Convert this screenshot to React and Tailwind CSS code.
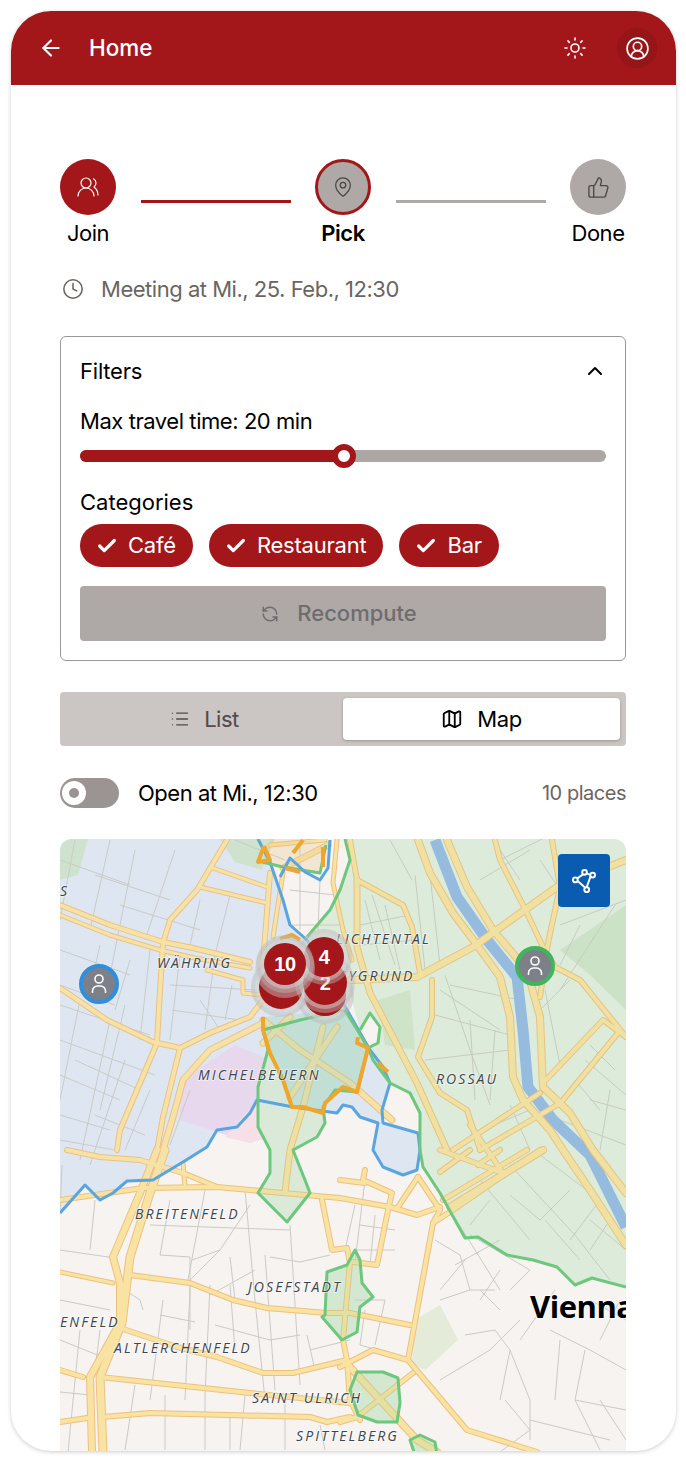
import React from 'react';
import { ArrowLeft, Sun, CircleUserRound, UsersRound, MapPin, ThumbsUp, Clock, ChevronUp, Check, RefreshCcw, List, Map as MapIcon } from 'lucide-react';

// major roads: [width, "x,y x,y ..."] in page coordinates
const roads = [
  [5, '60,905 110,925 163,942 193,948 250,962'],
  [4, '60,915 110,935 160,950 195,958 250,968'],
  [5, '227,840 197,890 170,920 163,943 160,990 157,1043 120,1130 117,1150'],
  [5, '60,988 107,1020 153,1042 180,1048 210,1033 250,1017 263,1000'],
  [5, '180,1048 163,1117 157,1150'],
  [6, '263,1023 210,1050 183,1080 173,1117 163,1150'],
  [4, '210,867 267,887'],
  [4, '200,887 267,903'],
  [4, '207,970 243,980 243,993 262,995'],
  [5, '270,873 263,963'],
  [4, '283,873 273,937'],
  [4, '337,840 333,883 343,930 352,960'],
  [6, '263,1020 300,1050 350,1083 392,1120'],
  [6, '337,1027 290,1097'],
  [6, '290,1017 263,1043'],
  [6, '323,1027 303,1107 290,1150 285,1192'],
  [4, '270,845 325,840'],
  [6, '283,868 328,845'],
  [5, '60,1200 143,1188 217,1187 283,1193 340,1198 390,1207 417,1215 440,1207'],
  [7, '157,1150 140,1193 113,1257 120,1283 120,1323 90,1377 92,1452'],
  [8, '165,1150 150,1193 130,1257 122,1323 100,1377 103,1452'],
  [5, '67,1150 100,1157 140,1160 183,1173 217,1187'],
  [4, '183,1163 185,1187'],
  [4, '60,1272 113,1283'],
  [5, '130,1275 190,1283 233,1300 267,1308 327,1313 350,1313 410,1325'],
  [5, '120,1328 177,1347 217,1357 263,1373 293,1373 347,1360'],
  [5, '60,1370 83,1377'],
  [5, '100,1377 250,1393 350,1403'],
  [5, '60,1422 87,1418'],
  [5, '103,1417 150,1413 310,1417 327,1422 350,1417'],
  [5, '322,1200 332,1250 347,1248 350,1263 343,1340 347,1360 350,1400 360,1420'],
  [5, '408,1360 433,1223 453,1210 540,1150'],
  [5, '408,1360 467,1430 537,1452'],
  [5, '408,1360 373,1350 340,1367'],
  [7, '350,1367 417,1440 437,1452'],
  [5, '413,1373 357,1417 340,1422'],
  [5, '418,1177 440,1210 433,1223'],
  [5, '418,1177 398,1207'],
  [5, '365,1170 363,1180 392,1193 388,1210 377,1265 353,1262'],
  [5, '340,1180 365,1183'],
  [7, '543,1150 450,1207'],
  [5, '527,1150 443,1200'],
  [5, '440,1150 503,1173 470,1125'],
  [5, '470,1150 440,1172'],
  [5, '500,1150 478,1165'],
  [7, '418,840 430,873 453,913 477,945 500,977 510,1017 513,1077 523,1100 550,1130 563,1150 590,1190 626,1245'],
  [7, '447,840 467,887 493,930 527,970 540,1017 543,1087 570,1113 593,1150 626,1193'],
  [7, '350,980 417,977 473,947 557,887 626,860'],
  [5, '495,840 500,860 527,913 543,947 555,967'],
  [5, '552,840 560,887 548,943 540,997'],
  [5, '555,967 580,980 626,1037'],
  [5, '543,1083 603,1020 626,1037'],
  [5, '563,1100 618,1033'],
  [5, '453,1150 540,1093'],
  [5, '480,1150 557,1105'],
  [5, '350,840 357,880 403,905 412,927 420,973'],
  [6, '357,880 357,947 370,993 417,1083 447,1150'],
  [5, '432,980 432,1017 418,1057 440,1093 467,1110 480,1150'],
];

// side streets
const streets = [
  '75,840 60,920', '110,840 90,930', '135,850 105,1000', '175,850 145,940', '60,860 130,885', '95,875 170,900',
  '120,905 200,930', '200,900 190,945', '60,950 130,975', '60,985 115,1005', '60,1040 155,1075', '60,1075 120,1100', '60,1115 110,1130',
  '80,1000 60,1100', '110,1020 80,1160', '150,950 140,1040', '125,1005 100,1110', '125,1060 90,1165',
  '170,985 255,990', '172,1010 240,1020', '180,955 170,1040', '215,955 205,1030', '200,1000 220,1030', '232,985 225,1020',
  '235,840 285,860', '300,845 300,880', '60,1005 150,1035', '75,1060 140,1090', '95,1115 145,1135', '150,1090 125,1150', '230,895 215,955',
  '190,1090 170,1145', '60,1140 115,1150', '130,960 115,1010', '100,945 90,990', '290,890 335,895', '288,925 340,925', '300,880 300,930', '320,880 318,930',
  '62,1165 60,1215', '60,1250 115,1258', '60,1300 110,1310', '95,1200 90,1250', '60,1340 110,1360', '80,1330 68,1452', '100,1330 95,1370', '60,1392 90,1395',
  '150,1225 290,1230', '170,1200 160,1255', '160,1255 190,1257 190,1290', '205,1190 188,1280', '250,1205 220,1250 190,1280 190,1330', '220,1250 192,1260',
  '125,1290 140,1300 143,1310', '163,1300 150,1400', '190,1290 185,1400', '210,1285 205,1395', '230,1285 235,1350', '230,1257 235,1300', '245,1190 255,1300 265,1400',
  '265,1255 275,1390', '290,1225 300,1385', '270,1257 300,1262 330,1255', '210,1295 255,1270', '160,1315 195,1322', '215,1325 270,1340 300,1335', '307,1335 315,1370', '310,1350 350,1340',
  '135,1385 125,1450', '165,1395 165,1450', '205,1395 205,1450', '245,1395 240,1450', '285,1400 285,1450', '320,1425 325,1450', '230,1415 230,1450',
  '355,1205 345,1250', '365,1180 355,1262', '375,1215 370,1265', '360,1225 395,1230', '355,1250 395,1250', '365,1310 360,1345 395,1355',
  '355,1300 385,1300', '385,1300 375,1345',
  '435,1240 460,1255 470,1290 495,1290', '440,1290 465,1260', '455,1265 500,1240', '470,1235 530,1270 510,1290', '500,1270 480,1300', '440,1300 470,1290', '480,1290 500,1310',
  '440,1380 490,1350 520,1320', '465,1335 495,1330 510,1350 500,1400', '510,1350 530,1400 530,1440', '555,1290 520,1340', '550,1330 590,1350 626,1370', '585,1350 575,1400 626,1410',
  '575,1400 600,1450', '505,1400 530,1430 500,1452', '530,1420 610,1440', '600,1400 626,1440', '560,1340 555,1400', '590,1300 626,1320', '620,1300 600,1340',
  '450,1210 500,1290', '480,1180 530,1240', '510,1165 575,1235', '540,1155 600,1200 570,1240', '570,1190 540,1220 510,1195', '590,1220 626,1250', '575,1235 610,1280', '610,1220 590,1250',
  '490,1200 470,1225', '545,1220 580,1260',
  '365,900 380,960', '372,895 395,965', '385,905 400,970', '360,925 410,915', '362,945 415,940', '415,875 425,970', '390,840 412,880', '430,875 440,965',
  '450,985 520,1000', '440,990 500,1030', '445,975 470,1050 490,1105', '435,1015 510,1035', '425,1060 510,1050', '470,1020 475,1100', '495,1030 490,1100',
  '500,860 560,830', '480,880 530,850', '520,880 500,850', '540,860 560,890', '560,925 626,900', '580,925 560,965', '615,905 560,990',
  '585,1060 626,1095', '590,1045 615,1070', '575,1080 600,1110', '560,1120 626,1145', '590,1100 626,1110', '610,1090 600,1150',
  '570,980 540,1010', '545,990 560,1065', '470,1135 530,1110', '510,1105 530,1150',
];

const blueArea = '60,839 258,839 270,862 283,900 290,925 307,940 347,1010 370,1050 383,1067 390,1083 382,1110 383,1123 418,1133 420,1150 417,1170 403,1175 383,1167 373,1150 378,1123 360,1117 352,1107 343,1105 337,1113 293,1107 257,1100 250,1113 237,1127 217,1130 207,1147 183,1162 153,1180 127,1181 113,1193 100,1200 85,1185 60,1213';
const greenArea = '350,839 626,839 626,1287 592,1278 575,1285 557,1267 533,1260 507,1255 478,1237 465,1238 440,1193 423,1167 420,1113 410,1093 390,1083 373,1060 368,1048 378,1043 380,1027 370,1013 360,1030 345,975 307,937 330,910 340,890 350,860';
const tealArea = '263,1017 345,1010 358,1037 368,1048 357,1092 335,1090 325,1103 323,1113 292,1107 270,1053';
const greenBlob1 = '263,1030 268,1050 258,1087 258,1127 270,1150 270,1173 258,1193 287,1222 310,1193 305,1180 293,1150 317,1137 325,1123 323,1107 335,1090 357,1092 368,1048 345,1010 300,1020';
const blob2 = '347,1265 327,1272 325,1315 322,1317 342,1340 357,1332 360,1307 373,1297 362,1283 360,1260 355,1250';
const blob3 = '357,1372 383,1372 398,1378 400,1403 397,1422 377,1422 358,1415 350,1390';
const blob4 = '410,1440 420,1435 435,1442 437,1455 415,1455';
const blueLine = blueArea.replace('60,839 ', '');
const greenLine1 = '345,839 350,860 340,890 330,910 307,937';
const greenLine2 = '360,1030 370,1013 380,1027 378,1043 368,1048 373,1060 390,1083 410,1093 420,1113 420,1150 423,1167 440,1193 465,1238 478,1237 507,1255 533,1260 557,1267 575,1285 592,1278 626,1287';
const greenLine3 = '262,862 283,867 320,873 326,845';
const orangeLine = '263,1017 263,1030 270,1053 283,1080 292,1107 303,1107 323,1113 325,1103 343,1087 357,1092 360,1080 368,1048 357,1043 358,1037';
const labels = [
  ['WÄHRING', 157, 968],
  ['LICHTENTAL', 336, 944],
  ['GYGRUND', 337, 981],
  ['MICHELBEUERN', 198, 1080],
  ['ROSSAU', 436, 1084],
  ['BREITENFELD', 135, 1219],
  ['JOSEFSTADT', 248, 1292],
  ['ENFELD', 60, 1327],
  ['ALTLERCHENFELD', 114, 1353],
  ['SAINT ULRICH', 252, 1403],
  ['SPITTELBERG', 296, 1441],
  ['S', 60, 896],
];

function Person({ x, y, ring }) {
  return (
    <g>
      <circle cx={x} cy={y} r="18" fill="#7d8088" stroke={ring} strokeWidth="4" />
      <circle cx={x} cy={y - 5} r="4" fill="none" stroke="#fff" strokeWidth="1.6" />
      <path d={`M${x - 6.5} ${y + 9} v-2 a5 5 0 0 1 5 -5 h3 a5 5 0 0 1 5 5 v2`} fill="none" stroke="#fff" strokeWidth="1.6" />
    </g>
  );
}

function Cluster({ x, y, r = 21, label }) {
  return (
    <g>
      <circle cx={x} cy={y} r={r + 8} fill="#b9b9b9" opacity="0.45" />
      <circle cx={x} cy={y} r={r + 4} fill="#e2dede" opacity="0.4" />
      <circle cx={x} cy={y} r={r} fill="#a3161a" />
      {label && (
        <text x={x} y={y + 7} textAnchor="middle" fontSize="20" fontWeight="700" fill="#fff" fontFamily="'Liberation Sans', sans-serif">{label}</text>
      )}
    </g>
  );
}

function MapDrawing() {
  return (
    <svg viewBox="60 839 566 612" width="566" height="612" className="block">
      <rect x="60" y="839" width="566" height="612" fill="#f6f3f0" />
      <polygon points={blueArea} fill="#e0e8f2" />
      <polygon points={greenArea} fill="#e4eee1" />
      <polygon points="60,839 88,839 78,875 60,880" fill="#cfe3cc" />
      <polygon points="220,839 275,839 262,870 235,862" fill="#cfe3cc" />
      <polygon points="180,1085 197,1070 235,1045 270,1060 290,1100 290,1130 250,1143 220,1133 180,1120" fill="#e9d8ee" />
      <polygon points="257,1100 293,1107 290,1130 250,1143 225,1137" fill="#f6dfe6" />
      <polygon points="378,1000 410,990 415,1050 385,1045" fill="#d3e5cd" />
      <polygon points="415,1320 440,1305 458,1340 425,1370 412,1365" fill="#e4ebd9" />
      <polygon points="560,950 626,905 626,1010 590,975" fill="#d0e4cb" />
      <polygon points={greenBlob1} fill="#e3ede2" />
      <polygon points={tealArea} fill="#d3e6e3" />
      <polygon points={blob2} fill="#e3ede2" />
      <polygon points={blob3} fill="#e3ede2" />
      <polygon points={blob4} fill="#e3ede2" />
      <g fill="none" stroke="#cbcac6" strokeWidth="1">
        {streets.map((pts, i) => <polyline key={i} points={pts} />)}
      </g>
      <polyline points="435,840 457,897 487,940 517,977 523,1030 528,1087 553,1120 590,1155 626,1227" fill="none" stroke="#94b8e6" strokeWidth="11" />
      <g fill="none" strokeLinejoin="round" strokeLinecap="round">
        {roads.map(([w, pts], i) => <polyline key={i} points={pts} stroke="#eec07e" strokeWidth={w + 1} />)}
        {roads.map(([w, pts], i) => <polyline key={i} points={pts} stroke="#f9e3a3" strokeWidth={w - 1} />)}
      </g>
      <polygon points={greenArea} fill="#a8d8a0" opacity="0.1" />
      <polygon points={blueArea} fill="#c5d5e8" opacity="0.05" />
      <polygon points={greenBlob1} fill="#a8d8a0" opacity="0.15" />
      <polygon points={tealArea} fill="#a0d4cc" opacity="0.2" />
      <polygon points={blob2} fill="#a8d8a0" opacity="0.25" />
      <polygon points={blob3} fill="#a8d8a0" opacity="0.25" />
      <polygon points={blob4} fill="#a8d8a0" opacity="0.25" />
      <polygon points="262,862 283,867 320,873 326,845 300,839 270,839" fill="#e9c88a" opacity="0.3" />
      <g fill="none" strokeWidth="3" strokeLinejoin="round">
        <polyline points={blueLine} stroke="#5aa5e0" />
        <polyline points={greenLine1} stroke="#6dc77d" />
        <polyline points={greenLine2} stroke="#6dc77d" />
        <polyline points={greenLine3} stroke="#6dc77d" />
        <polygon points={greenBlob1} stroke="#6dc77d" />
        <polygon points={blob2} stroke="#6dc77d" />
        <polygon points={blob3} stroke="#6dc77d" />
        <polygon points={blob4} stroke="#6dc77d" />
        <polyline points="280,877 290,858 305,872 320,880 328,868 330,840" stroke="#5aa5e0" />
        <g stroke="#eea62c" strokeWidth="4">
          <polyline points={orangeLine} />
          <polyline points="264,846 258,862 270,860 264,846" />
          <polyline points="285,868 300,872" />
          <polyline points="303,840 293,853" />
          <polyline points="323,847 323,867" />
          <polyline points="378,1063 388,1072" />
          <polyline points="280,939 292,935 300,940" />
        </g>
      </g>
      {labels.map(([t, x, y]) => (
        <text key={t} x={x} y={y} fontSize="14" fontStyle="italic" letterSpacing="2.1" fill="#3a4650" stroke="#fff" strokeWidth="2" strokeOpacity="0.5" paintOrder="stroke" fontFamily="'Open Sans', sans-serif">{t}</text>
      ))}
      <text x="530" y="1318" fontSize="31" fontWeight="700" fill="#000" stroke="#fff" strokeWidth="2.5" strokeOpacity="0.6" paintOrder="stroke" fontFamily="'Open Sans', sans-serif">Vienna</text>
      <Person x={99} y={984} ring="#2f8fdc" />
      <Person x={535} y={966} ring="#41b55c" />
      <Cluster x={325} y={995} />
      <Cluster x={281} y={987} r={22} />
      <Cluster x={325} y={983} r={22} label="2" />
      <Cluster x={324} y={957} r={20} label="4" />
      <circle cx="285" cy="968" r="30" fill="#c9c9c9" opacity="0.45" />
      <Cluster x={285} y={964} label="10" />
    </svg>
  );
}

function Step({ label, active, children, className }) {
  return (
    <div className="flex flex-col items-center w-14 shrink-0">
      <div className={`w-14 h-14 rounded-full flex items-center justify-center ${className}`}>{children}</div>
      <span className={`mt-[4px] text-[22px] leading-[28px] whitespace-nowrap text-black ${active ? 'font-semibold' : ''}`}>{label}</span>
    </div>
  );
}

function Chip({ label }) {
  return (
    <div className="h-[43px] pl-[16px] pr-[17px] rounded-full bg-[#a3161a] text-white flex items-center gap-[10px] text-[22px] tracking-[-0.01em]">
      <Check size={22} strokeWidth={3.5} />
      <span>{label}</span>
    </div>
  );
}

export default function App() {
  return (
    <div className="w-[686px] h-[1462px] bg-white pt-[11px] px-[11px] font-['Inter',sans-serif] tracking-[-0.03em]">
      <div className="w-[665px] h-[1440px] rounded-[40px] overflow-hidden bg-white flex flex-col shadow-[0_1px_4px_rgba(0,0,0,0.2)]">
        <header className="h-[74px] shrink-0 bg-[#a3161a] flex items-center text-white pl-[27px] pr-[19px]">
          <ArrowLeft size={26} strokeWidth={2} />
          <span className="ml-[25px] text-[22.5px] font-medium tracking-normal">Home</span>
          <Sun size={24} strokeWidth={1.6} className="ml-auto" />
          <div className="ml-[30px] w-[40px] h-[40px] rounded-full bg-[#951518] flex items-center justify-center">
            <CircleUserRound size={25} strokeWidth={1.6} />
          </div>
        </header>

        <main className="flex-1 pl-[49px] pr-[50px] pt-[74px] min-h-0 flex flex-col">
          <div className="flex gap-[24.5px]">
            <Step label="Join" className="bg-[#a3161a] text-white">
              <UsersRound size={24} strokeWidth={1.2} />
            </Step>
            <div className="flex-1 h-[3px] mt-[41px] bg-[#a3161a]" />
            <Step label="Pick" active className="bg-[#aea9a6] border-[3px] border-[#a3161a] text-[#4b4745]">
              <MapPin size={22} strokeWidth={1.4} />
            </Step>
            <div className="flex-1 h-[3px] mt-[41px] bg-[#aea9a6]" />
            <Step label="Done" className="bg-[#aea9a6] text-[#4b4745]">
              <ThumbsUp size={23} strokeWidth={1.4} />
            </Step>
          </div>

          <div className="mt-[28px] h-[28px] flex items-center text-[#6b6562] text-[22px]">
            <Clock size={22} strokeWidth={1.7} className="ml-[2px]" />
            <span className="ml-[17px]">Meeting at Mi., 25. Feb., 12:30</span>
          </div>

          <section className="mt-[33px] h-[325px] border border-[#9b9795] rounded-[6px] px-[19px] text-black">
            <div className="h-[68px] pt-[20px] flex justify-between text-[22px] leading-[28px] tracking-[-0.01em]">
              <span>Filters</span>
              <ChevronUp size={24} strokeWidth={2} className="mt-[2px] mr-[-1px]" />
            </div>
            <div className="mt-[2px] text-[22px] leading-[28px] tracking-[-0.02em]">Max travel time: 20 min</div>
            <div className="mt-[15px] relative h-[12px] rounded-full bg-[#aca7a4]">
              <div className="h-full w-1/2 rounded-full bg-[#a3161a]" />
              <div className="absolute left-[252px] top-[-6px] w-[24px] h-[24px] rounded-full bg-white border-[6px] border-[#a3161a]" />
            </div>
            <div className="mt-[26px] text-[22px] leading-[28px] tracking-normal">Categories</div>
            <div className="mt-[8px] flex gap-[16px]">
              <Chip label="Café" />
              <Chip label="Restaurant" />
              <Chip label="Bar" />
            </div>
            <button className="mt-[19px] w-full h-[55px] pr-[8px] rounded-[4px] bg-[#aea9a6] text-[#6f6c6f] flex items-center justify-center gap-[18px] text-[22px] font-medium tracking-normal">
              <RefreshCcw size={18} strokeWidth={2} />
              <span>Recompute</span>
            </button>
          </section>

          <div className="mt-[31px] h-[54px] rounded-[4px] bg-[#cbc5c3] p-[6px] flex text-[22px]">
            <div className="flex-1 flex items-center justify-center gap-[14px] text-[#4f4b4a]">
              <List size={20} strokeWidth={1.6} />
              <span>List</span>
            </div>
            <div className="w-[277px] rounded-[4px] bg-white flex items-center justify-center gap-[14px] text-black shadow-[0_1px_3px_rgba(0,0,0,0.25)]">
              <MapIcon size={22} strokeWidth={2} />
              <span>Map</span>
            </div>
          </div>

          <div className="mt-[31px] h-[32px] flex items-center">
            <div className="relative w-[59px] h-[30px] rounded-full bg-[#9a9492] shrink-0">
              <div className="absolute left-[2px] top-[3px] w-[24px] h-[24px] rounded-full bg-white flex items-center justify-center">
                <div className="w-[10px] h-[10px] rounded-full bg-[#9a9492]" />
              </div>
            </div>
            <span className="ml-[19px] text-[22px] text-black">Open at Mi., 12:30</span>
            <span className="ml-auto text-[20px] text-[#6b6562]">10 places</span>
          </div>

          <div className="relative mt-[30px] h-[612px] rounded-t-[12px] overflow-hidden">
            <MapDrawing />
            <button className="absolute top-[15px] right-[16px] w-[52px] h-[53px] rounded-[4px] bg-[#0a5cb0] flex items-center justify-center">
              <svg viewBox="0 0 24 24" width="26" height="26" fill="none" stroke="#fff" strokeWidth="1.8">
                <path d="M13 4.5 18.5 6.5 14 19 4.5 10.5Z" />
                <circle cx="12.5" cy="4" r="2.2" fill="#0a5cb0" />
                <circle cx="20" cy="6.5" r="2.2" fill="#0a5cb0" />
                <circle cx="14.5" cy="20" r="2.2" fill="#0a5cb0" />
                <circle cx="4" cy="11" r="2.2" fill="#0a5cb0" />
              </svg>
            </button>
          </div>
        </main>
      </div>
    </div>
  );
}
